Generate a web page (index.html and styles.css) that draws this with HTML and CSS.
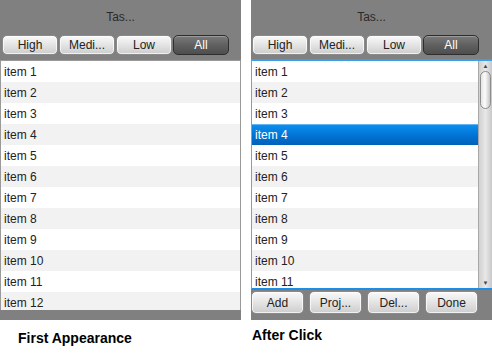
FILE: index.html
```html
<!DOCTYPE html>
<html lang="en">
<head>
  <meta charset="UTF-8">
  <title>Task List States</title>
  <link rel="stylesheet" href="styles.css">
</head>
<body>
  <div class="screens">
    <div class="shot">
      <div class="panel">
        <div class="title">Tas...</div>
        <div class="btn-row">
          <button class="btn">High</button>
          <button class="btn">Medi...</button>
          <button class="btn">Low</button>
          <button class="btn active">All</button>
        </div>
        <div class="list">
          <ul class="rows">
            <li>item 1</li>
            <li>item 2</li>
            <li>item 3</li>
            <li>item 4</li>
            <li>item 5</li>
            <li>item 6</li>
            <li>item 7</li>
            <li>item 8</li>
            <li>item 9</li>
            <li>item 10</li>
            <li>item 11</li>
            <li>item 12</li>
          </ul>
        </div>
      </div>
      <div class="caption">First Appearance</div>
    </div>

    <div class="shot second">
      <div class="panel">
        <div class="title">Tas...</div>
        <div class="btn-row">
          <button class="btn">High</button>
          <button class="btn">Medi...</button>
          <button class="btn">Low</button>
          <button class="btn active">All</button>
        </div>
        <div class="list focused">
          <ul class="rows">
            <li>item 1</li>
            <li>item 2</li>
            <li>item 3</li>
            <li class="selected">item 4</li>
            <li>item 5</li>
            <li>item 6</li>
            <li>item 7</li>
            <li>item 8</li>
            <li>item 9</li>
            <li>item 10</li>
            <li>item 11</li>
          </ul>
          <div class="scrollbar">
            <div class="arrow">&#9650;</div>
            <div class="track"><div class="thumb"></div></div>
            <div class="arrow">&#9660;</div>
          </div>
        </div>
        <div class="btn-row bottom">
          <button class="btn">Add</button>
          <button class="btn">Proj...</button>
          <button class="btn">Del...</button>
          <button class="btn">Done</button>
        </div>
      </div>
      <div class="caption">After Click</div>
    </div>
  </div>
</body>
</html>
```

FILE: styles.css
```css
body {
  margin: 0;
  background-color: white;
  font-family: "Liberation Sans", Arial, sans-serif;
  font-size: 12px;
  color: #222;
}

.screens {
  display: flex;
  gap: 10px;
}

.shot {
  width: 241px;
}

.panel {
  background-color: #808080;
  height: 320px;
  display: flex;
  flex-direction: column;
}

.title {
  height: 35px;
  line-height: 35px;
  text-align: center;
  color: #2a2a2a;
}

.btn-row {
  display: flex;
  gap: 1px;
  padding-left: 2px;
}

.second .btn-row {
  padding-left: 1px;
}

.btn {
  width: 56px;
  height: 20px;
  padding: 0;
  font-family: inherit;
  font-size: 12px;
  white-space: nowrap;
  color: #222;
  border: 1px solid #8a8a8a;
  border-radius: 5px;
  background: linear-gradient(#fafafa, #e6e6e6 45%, #cdcdcd);
  box-shadow: inset 0 0 0 1px rgba(255, 255, 255, 0.7);
}

.btn.active {
  color: white;
  border-color: #2e2e2e;
  background: linear-gradient(#7a7a7a, #606060 50%, #4e4e4e);
  box-shadow: inset 0 1px 0 rgba(255, 255, 255, 0.25);
}

.list {
  margin-top: 5px;
  height: 250px;
  background-color: white;
  border: 1px solid #9a9a9a;
  border-bottom: none;
  box-sizing: border-box;
  overflow: hidden;
  display: flex;
}

.list.focused {
  margin-top: 4px;
  height: 231px;
  border-top: 2px solid #3d9fe8;
  border-bottom: 2px solid #1d8ee8;
  border-right: none;
}

.rows {
  list-style: none;
  margin: 0;
  padding: 0;
  flex: 1;
}

.rows li {
  height: 21px;
  line-height: 20px;
  padding: 1px 0 0 3px;
  box-sizing: border-box;
}

.rows li:nth-child(even) {
  background-color: #f2f2f2;
}

.rows li.selected {
  color: white;
  background: linear-gradient(#0a8ff0, #0070d0 60%, #0062b8);
  border-top: 1px solid #64b4f0;
  line-height: 19px;
}

.scrollbar {
  width: 13px;
  display: flex;
  flex-direction: column;
  background: linear-gradient(90deg, #d0d0d0, #e8e8e8 50%, #c8c8c8);
  border-left: 1px solid #a8a8a8;
}

.arrow {
  height: 10px;
  font-size: 6px;
  line-height: 10px;
  text-align: center;
  color: #444;
}

.track {
  flex: 1;
  padding: 0 1px;
}

.thumb {
  height: 36px;
  border: 1px solid #8c8c8c;
  border-radius: 6px;
  background: linear-gradient(90deg, #e4e4e4, #fbfbfb 45%, #c4c4c4);
}

.btn-row.bottom {
  margin-top: 1px;
  gap: 5px;
  padding-left: 0;
}

.btn-row.bottom .btn {
  width: 53px;
  height: 23px;
}

.caption {
  margin-top: 10px;
  padding-left: 18px;
  font-size: 14px;
  font-weight: bold;
  line-height: 16px;
  color: #000;
}

.second .caption {
  padding-left: 1px;
  margin-top: 7px;
}
```
